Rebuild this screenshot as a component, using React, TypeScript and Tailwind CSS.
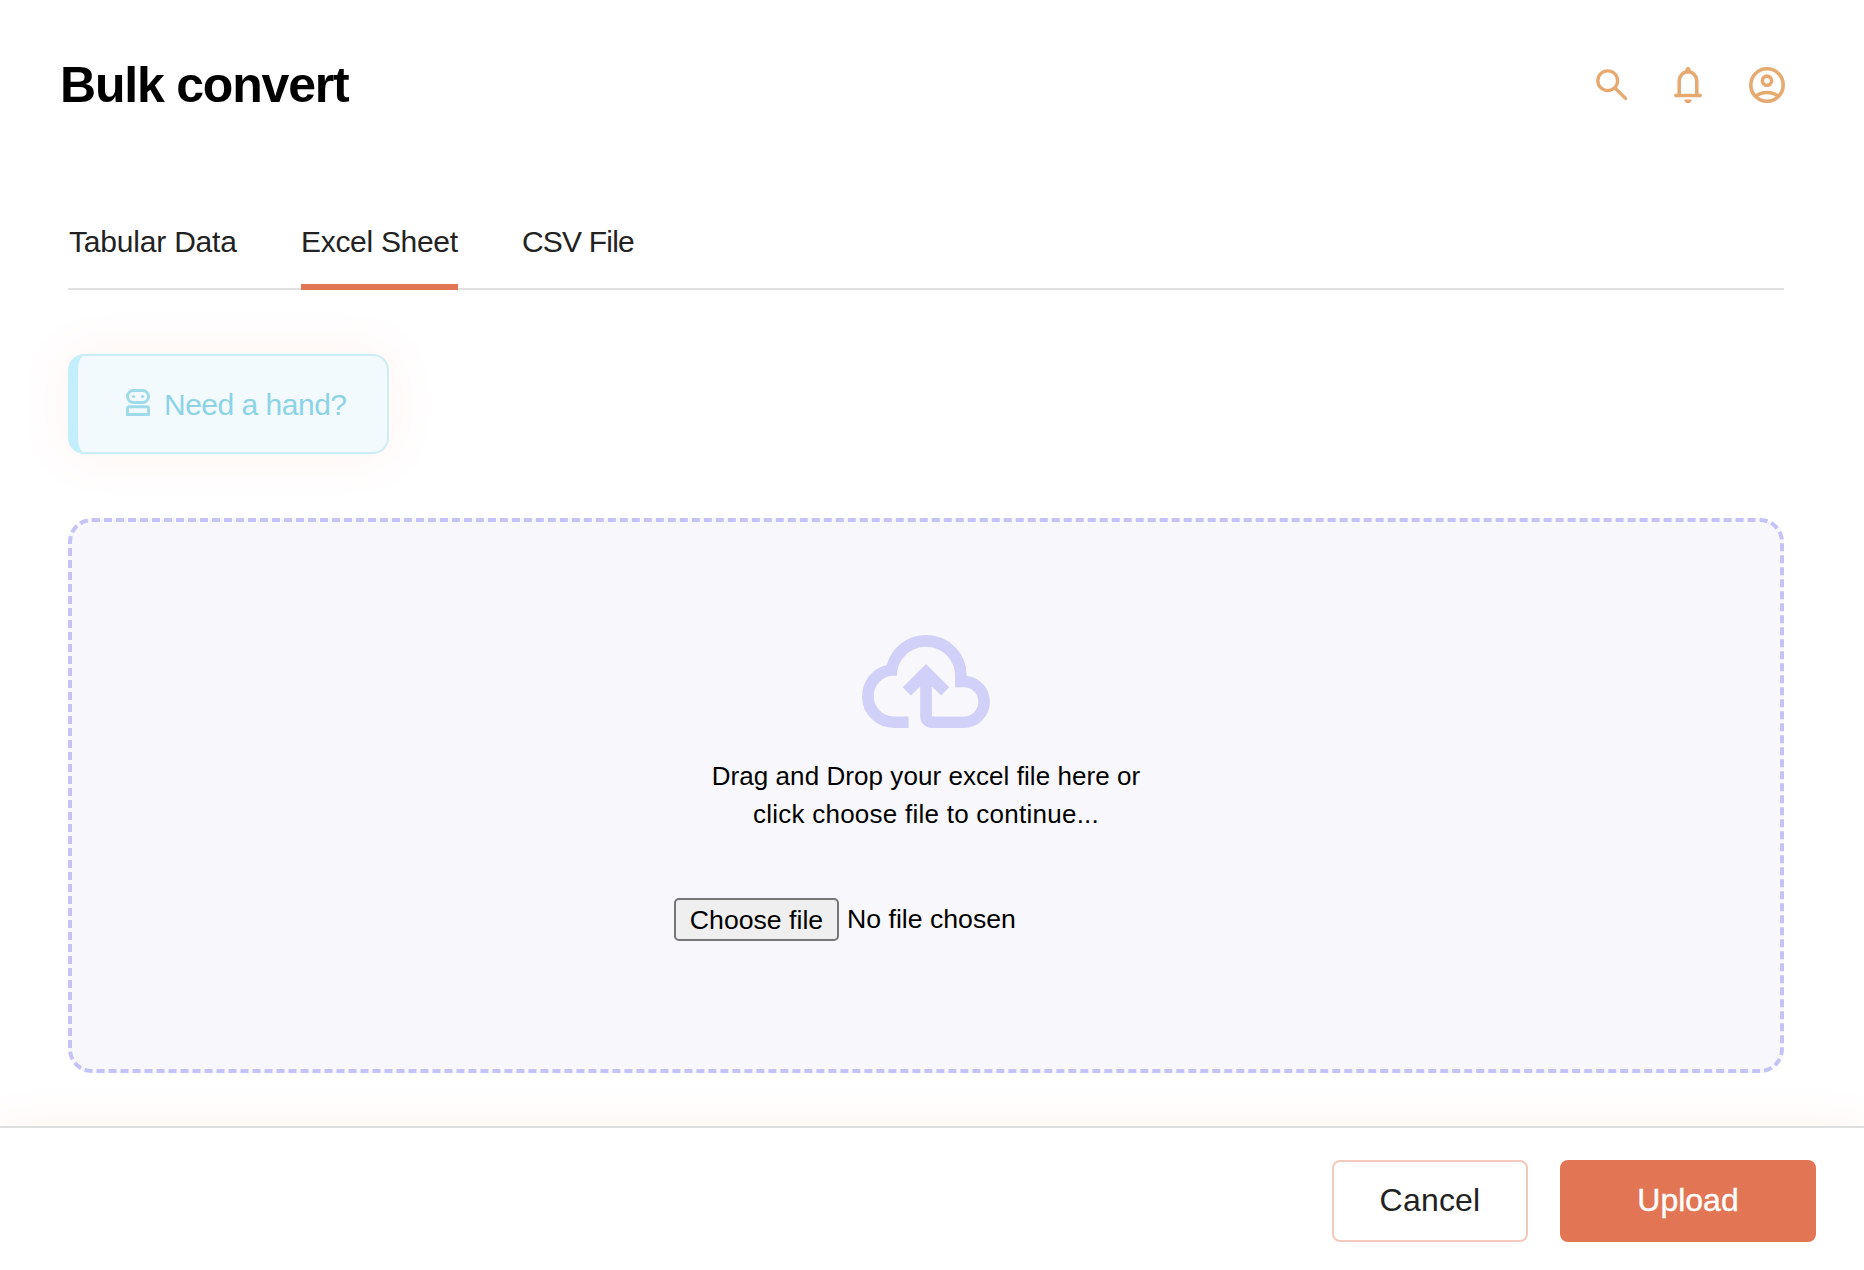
const tabs = [
  { label: "Tabular Data", active: false, cls: "w-[169px] tracking-[-0.2px] pl-px" },
  { label: "Excel Sheet", active: true, cls: "w-[157px] tracking-[-0.3px]" },
  { label: "CSV File", active: false, cls: "w-[114px] tracking-[-0.8px]" },
];

function SearchIcon() {
  return (
    <svg className="h-8 w-8" viewBox="0 0 32 32" fill="none" stroke="currentColor" strokeWidth="3.3" strokeLinecap="round">
      <circle cx="11.7" cy="11.7" r="9.9" />
      <path d="M19 19 29.6 29.4" />
    </svg>
  );
}

function BellIcon() {
  return (
    <svg className="h-9 w-7" viewBox="0 0 28 36" fill="none" stroke="currentColor" strokeWidth="3.5" strokeLinecap="round">
      <path d="M1.8 28.5H26.2M5.2 28V14a8.8 9.2 0 0 1 17.6 0V28" />
      <path d="M14 2.7V4" strokeWidth="5.2" />
      <path d="M10.4 32.4h7.2a3.6 3.6 0 0 1-7.2 0z" fill="currentColor" stroke="none" />
    </svg>
  );
}

function AccountIcon() {
  return (
    <svg className="h-9 w-9" viewBox="0 0 36 36" fill="none" stroke="currentColor" strokeWidth="3.6">
      <circle cx="18" cy="18" r="16.2" />
      <circle cx="18" cy="13.7" r="4.6" />
      <path d="M7 29.2c6-5 16-5 22 0" />
    </svg>
  );
}

function BotIcon() {
  return (
    <svg className="h-[27px] w-6" viewBox="0 0 24 27" fill="none" stroke="currentColor" strokeWidth="2.9">
      <rect x="1.45" y="1.45" width="21.1" height="12.1" rx="6.05" />
      <path d="M1.45 25.55v-6.2a1.6 1.6 0 0 1 1.6-1.6h17.9a1.6 1.6 0 0 1 1.6 1.6v6.2z" />
      <circle cx="7.5" cy="7.5" r="1.6" fill="currentColor" stroke="none" />
      <circle cx="16.5" cy="7.5" r="1.6" fill="currentColor" stroke="none" />
    </svg>
  );
}

function CloudUploadIcon() {
  return (
    <svg className="h-[93px] w-32 text-[#d0d0f8]" viewBox="40 -800 880 640" fill="currentColor">
      <path d="M260-160q-91 0-155.5-63T40-377q0-78 47-139t123-78q25-92 100-149t170-57q117 0 198.500 81.500T760-520q69 8 114.500 59.500T920-340q0 75-52.500 127.500T740-160H520q-33 0-56.500-23.500T440-240v-206l-64 62-56-56 160-160 160 160-56 56-64-62v206h220q42 0 71-29t29-71q0-42-29-71t-71-29h-60v-80q0-83-58.500-141.500T480-720q-83 0-141.500 58.500T280-520h-20q-58 0-99 41t-41 99q0 58 41 99t99 41h100v80H260Z" />
    </svg>
  );
}

export default function App() {
  return (
    <div className="flex h-[1270px] w-[1864px] flex-col overflow-hidden bg-white font-['Liberation_Sans',Arial,sans-serif] text-[#222]">
      <header className="flex h-[170px] items-center justify-between pr-[79px] pl-[60px]">
        <h1 className="text-[50px] leading-none font-bold tracking-[-1.2px] text-black">Bulk convert</h1>
        <div className="flex items-center text-[#e6a970]">
          <SearchIcon />
          <div className="ml-[46px]"><BellIcon /></div>
          <div className="ml-[47px]"><AccountIcon /></div>
        </div>
      </header>

      <main className="flex flex-1 flex-col pr-20 pl-[68px]">
        <nav className="mt-[50px] flex h-[70px] gap-16 border-b-2 border-[#e0e0e0]">
          {tabs.map((t) => (
            <button
              key={t.label}
              className={`h-[70px] text-left text-[30px] leading-[43px] whitespace-nowrap ${t.cls} ${
                t.active ? "border-b-[6px] border-[#e27654] pb-[21px]" : "pb-[27px]"
              }`}
            >
              {t.label}
            </button>
          ))}
        </nav>

        <button className="mt-16 flex h-[100px] w-[321px] items-center gap-[14px] rounded-2xl border-2 border-l-[10px] border-[#cdedf5] border-l-[#c2effb] bg-[#f2fafd] pl-12 text-[30px] tracking-[-0.5px] text-[#8dd3e6] shadow-[0_0_48px_rgba(255,130,100,0.10)]">
          <span className="-mt-1 text-[#9fdbea]"><BotIcon /></span>
          <span className="whitespace-nowrap">Need a hand?</span>
        </button>

        <section className="mt-16 flex h-[555px] w-[1716px] flex-col items-center rounded-3xl border-4 border-dashed border-[#c5c2f8] bg-[#f8f8fc] pt-[113px] text-black">
          <CloudUploadIcon />
          <p className="mt-[29px] text-center text-[26px] leading-[38px] tracking-[0.06px]">
            Drag and Drop your excel file here or
            <br />
            <span className="tracking-[0.25px]">click choose file to continue...</span>
          </p>
          <div className="mt-[65px] flex w-[504px] items-center gap-2 text-[26.67px]">
            <button className="h-[43px] w-[165px] rounded-[5px] border-2 border-[#767676] bg-[#efefef] leading-[38px] whitespace-nowrap">
              Choose file
            </button>
            <span className="-mt-0.5">No file chosen</span>
          </div>
        </section>
      </main>

      <footer className="flex h-36 items-start justify-end gap-8 border-t-2 border-[#dedede] bg-white pt-8 pr-12 text-[32px] shadow-[0_0_40px_rgba(255,130,100,0.10)]">
        <button className="h-[82px] w-[196px] rounded-lg border-2 border-[#f3c9bd] bg-white pb-0.5 tracking-[0.2px]">Cancel</button>
        <button className="h-[82px] w-64 rounded-lg bg-[#e27654] pb-0.5 text-white [-webkit-text-stroke:0.4px_white]">Upload</button>
      </footer>
    </div>
  );
}
